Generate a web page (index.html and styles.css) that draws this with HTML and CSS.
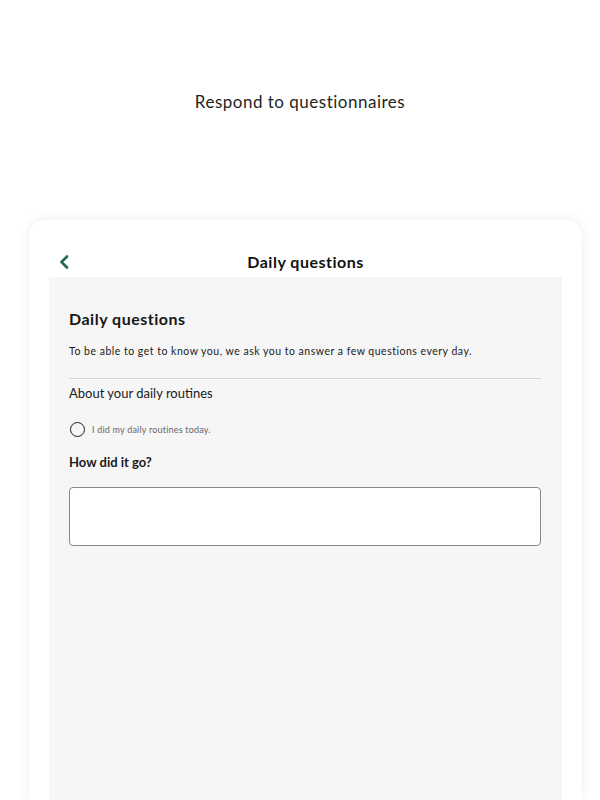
FILE: index.html
```html
<!DOCTYPE html>
<html lang="en">
<head>
<meta charset="utf-8">
<title>Respond to questionnaires</title>
<link rel="stylesheet" href="styles.css">
</head>
<body>
<main class="page">
  <h1 class="page-title">Respond to questionnaires</h1>
  <section class="card">
    <header class="card-header">
      <button class="back" aria-label="Back">
        <svg width="10" height="14" viewBox="0 0 10 14"><path d="M8 1.5 L2.5 7 L8 12.5" fill="none" stroke="#1e6b4e" stroke-width="2.6" stroke-linecap="round" stroke-linejoin="round"/></svg>
      </button>
      <h2 class="card-title">Daily questions</h2>
    </header>
    <div class="panel">
      <h3 class="form-title">Daily questions</h3>
      <p class="form-desc">To be able to get to know you, we ask you to answer a few questions every day.</p>
      <hr class="divider">
      <p class="section-label">About your daily routines</p>
      <label class="radio-row">
        <span class="radio"></span>
        <span class="radio-text">I did my daily routines today.</span>
      </label>
      <p class="question">How did it go?</p>
      <div class="textarea"></div>
    </div>
  </section>
</main>
</body>
</html>
```

FILE: styles.css
```css
* { box-sizing: border-box; }
html, body { margin: 0; padding: 0; background: #ffffff; }
body {
  font-family: "Lato", "Noto Sans", sans-serif;
  color: #1a1a1a;
  height: 800px;
  overflow: hidden;
}
.page {
  display: flex;
  flex-direction: column;
  align-items: center;
}
.page-title {
  margin: 91px 0 0;
  font-size: 17px;
  font-weight: 400;
  line-height: 22px;
  color: #1f1f1f;
  letter-spacing: 0.5px;
}
.card {
  align-self: flex-start;
  margin: 107px 0 0 29px;
  width: 553px;
  height: 580px;
  background: #fff;
  border-radius: 16px 16px 0 0;
  box-shadow: 0 0 12px rgba(0,0,0,0.08);
  padding: 0 20px;
  display: flex;
  flex-direction: column;
}
.card-header {
  height: 57px;
  display: flex;
  align-items: flex-end;
  justify-content: center;
  position: relative;
  padding-bottom: 5px;
}
.back {
  position: absolute;
  left: 10px;
  bottom: 8px;
  border: 0;
  background: none;
  padding: 0;
  width: 10px;
  height: 14px;
  display: block;
}
.back svg { display: block; }
.card-title {
  margin: 0;
  font-size: 16px;
  font-weight: 700;
  line-height: 20px;
  color: #111;
  letter-spacing: 0.5px;
}
.panel {
  flex: 1;
  background: #f6f6f6;
  padding: 32px 21px 0 20px;
}
.form-title {
  margin: 0;
  font-size: 16px;
  font-weight: 700;
  line-height: 20px;
  color: #161616;
  letter-spacing: 0.5px;
}
.form-desc {
  margin: 15px 0 0;
  font-size: 10.5px;
  line-height: 14px;
  color: #1a1a1a;
  letter-spacing: 0.5px;
}
.divider {
  margin: 20px 0 0;
  border: 0;
  border-top: 1px solid #d6d6d6;
}
.section-label {
  margin: 5px 0 0;
  font-size: 13px;
  line-height: 18px;
  color: #1a1a1a;
}
.radio-row {
  display: flex;
  align-items: center;
  gap: 7px;
  margin-top: 20px;
  padding-left: 1px;
}
.radio {
  width: 15px;
  height: 15px;
  border: 1.5px solid #1a1a1a;
  border-radius: 50%;
  background: transparent;
  flex: none;
}
.radio-text {
  font-size: 9px;
  color: #666;
  line-height: 12px;
  letter-spacing: 0.2px;
}
.question {
  margin: 16px 0 0;
  font-size: 13px;
  font-weight: 700;
  line-height: 18px;
  color: #1a1a1a;
}
.textarea {
  margin-top: 16px;
  height: 59px;
  background: #fff;
  border: 1px solid #888;
  border-radius: 4px;
}
```
